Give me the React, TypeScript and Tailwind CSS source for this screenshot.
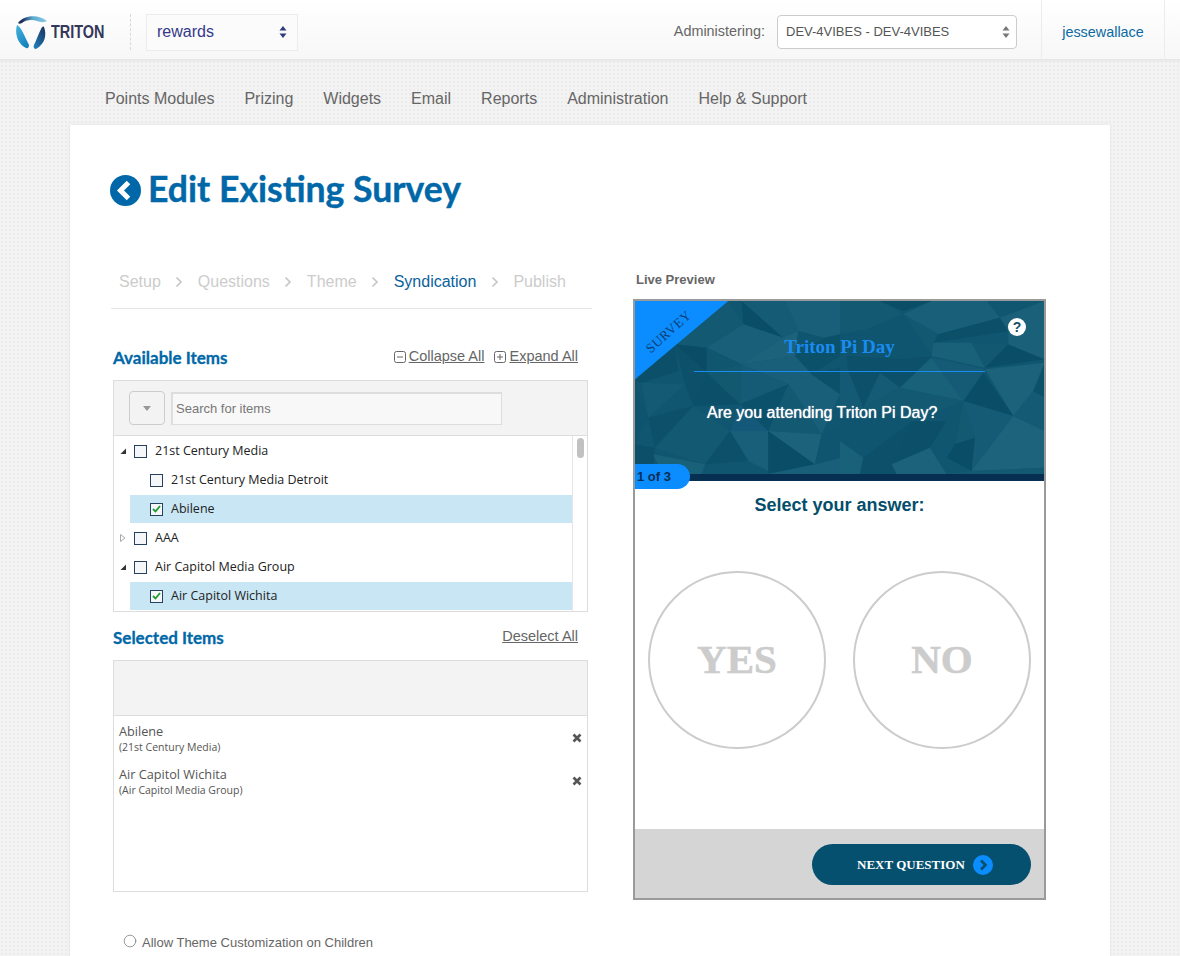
import React from 'react';
import { Circle } from 'lucide-react';

const navItems = ['Points Modules', 'Prizing', 'Widgets', 'Email', 'Reports', 'Administration', 'Help & Support'];

const steps = [
  { label: 'Setup', active: false },
  { label: 'Questions', active: false },
  { label: 'Theme', active: false },
  { label: 'Syndication', active: true },
  { label: 'Publish', active: false },
];

const treeRows = [
  { label: '21st Century Media', level: 0, toggle: 'open', checked: false },
  { label: '21st Century Media Detroit', level: 1, toggle: '', checked: false },
  { label: 'Abilene', level: 1, toggle: '', checked: true },
  { label: 'AAA', level: 0, toggle: 'closed', checked: false },
  { label: 'Air Capitol Media Group', level: 0, toggle: 'open', checked: false },
  { label: 'Air Capitol Wichita', level: 1, toggle: '', checked: true },
];

const selectedItems = [
  { name: 'Abilene', parent: '(21st Century Media)' },
  { name: 'Air Capitol Wichita', parent: '(Air Capitol Media Group)' },
];

// banner facets, in a 1227 x 519 box (3x the banner size)
const leftFacets: [string, string][] = [
  ['280,0 325,70 215,140 120,130', '#135972'],
  ['320,0 445,110 325,70', '#0a4d67'],
  ['320,0 450,0 490,90 445,110', '#165b75'],
  ['325,70 445,110 320,190 215,140', '#1a5f79'],
  ['215,140 120,130 215,215', '#0a4c65'],
  ['215,140 320,190 215,215', '#11566f'],
  ['320,190 445,110 490,90 480,165', '#1c627b'],
  ['490,90 570,110 480,165', '#0f5570'],
  ['450,0 615,0 615,100 570,110 490,90', '#1a5f79'],
  ['480,165 570,110 615,100 615,165 530,220', '#0c516a'],
  ['320,190 480,165 530,220 460,250', '#1a5f79'],
  ['0,240 120,130 130,210 20,245', '#0b4f69'],
  ['20,245 150,250 40,350', '#155a74'],
  ['120,130 215,215 175,315 150,250', '#0c506a'],
  ['215,215 315,310 175,315', '#0b4f69'],
  ['215,215 320,190 315,310', '#12586f'],
  ['320,190 460,250 315,310', '#165b75'],
  ['460,250 530,220 615,280 560,400', '#1a5f79'],
  ['530,220 615,200 615,280', '#0c516a'],
  ['315,310 460,250 400,390', '#0c516b'],
  ['460,250 560,400 400,390', '#135972'],
  ['40,350 175,315 60,440', '#0c506a'],
  ['175,315 285,390 210,490 60,440', '#135972'],
  ['0,240 40,350 0,430', '#0e546e'],
  ['0,430 60,440 55,490 0,519', '#0b4f68'],
  ['315,310 400,390 285,390', '#14597a'],
  ['285,390 400,390 400,510 340,480', '#1a5f79'],
  ['285,390 340,480 210,490', '#0c506a'],
  ['400,390 540,490 400,519', '#0a4d67'],
  ['400,390 560,400 540,490', '#1c627b'],
  ['55,460 210,490 200,519 80,519', '#196079'],
  ['540,490 615,470 615,519 400,519', '#1a5f79'],
  ['560,400 615,380 615,470 540,490', '#0f556f'],
];

const rightFacets: [string, string][] = [
  ['0,0 120,0 190,40 80,85 0,100', '#135972'],
  ['120,0 275,0 190,30', '#0a4d67'],
  ['190,40 275,0 440,0 480,50 295,100', '#1a5f79'],
  ['190,40 275,160 295,100', '#125870'],
  ['295,100 480,50 505,90 280,125', '#0b4f69'],
  ['280,125 395,125 435,200 275,165', '#196079'],
  ['505,130 615,175 435,200', '#0a4d67'],
  ['480,50 615,0 615,175 505,130 505,90', '#1a6079'],
  ['395,125 505,130 435,200', '#125870'],
  ['0,100 80,85 190,40 275,160 180,175 20,165', '#0f5570'],
  ['20,165 180,175 275,165 180,260 120,215 25,210', '#0c506a'],
  ['435,205 615,185 580,270 520,345', '#1c627b'],
  ['430,215 370,300 520,345', '#0a4d67'],
  ['180,260 275,170 370,300', '#196079'],
  ['275,170 435,205 370,300', '#165b75'],
  ['25,210 120,215 70,320', '#0c506a'],
  ['0,210 25,210 70,320 0,350', '#155a74'],
  ['120,215 180,260 70,320', '#165b75'],
  ['70,320 180,260 370,300 220,360', '#135972'],
  ['0,350 70,320 220,360 70,470 0,420', '#0f5570'],
  ['0,420 70,470 60,519 0,519', '#196079'],
  ['220,360 320,360 270,440 155,490', '#0b4f69'],
  ['70,470 220,360 155,490 170,519 60,519', '#0c506a'],
  ['320,360 370,300 345,430 270,440', '#11566f'],
  ['370,300 405,410 345,430', '#135972'],
  ['345,430 405,410 395,510 320,470', '#0a4d67'],
  ['370,300 520,345 395,510 405,410', '#165b75'],
  ['520,345 615,390 615,500 395,510', '#1d637c'],
  ['520,345 580,270 615,290 615,390', '#155a74'],
  ['580,270 615,185 615,290', '#0c516a'],
  ['155,490 270,440 320,519 170,519', '#1c627b'],
  ['270,440 320,470 395,510 320,519', '#11566f'],
  ['395,510 615,500 615,519 320,519', '#135972'],
];

const Logo = () => (
  <svg width="32" height="34" viewBox="0 0 32 34" className="shrink-0">
    <defs>
      <linearGradient id="logoTop" x1="0" y1="0" x2="1" y2="0">
        <stop offset="0.15" stopColor="#1c2f5c" />
        <stop offset="0.5" stopColor="#5aa9d0" />
        <stop offset="1" stopColor="#8ccbe6" />
      </linearGradient>
      <linearGradient id="logoLeft" x1="0" y1="0" x2="0.6" y2="1">
        <stop offset="0" stopColor="#45b4e0" />
        <stop offset="1" stopColor="#1583bd" />
      </linearGradient>
      <linearGradient id="logoRight" x1="1" y1="0" x2="0.2" y2="1">
        <stop offset="0" stopColor="#1c2f5c" />
        <stop offset="1" stopColor="#1f7db8" />
      </linearGradient>
    </defs>
    <path d="M3 8 C8 1 22 -2 32 6 C28 8 26 7 22 6 C17 4 10 5 7 8 C5 9 4 9 3 8Z" fill="url(#logoTop)" />
    <path d="M2 10 C6 12 9 20 14 30 C14 32 13 34 11 33 C4 30 -1 20 2 10Z" fill="url(#logoLeft)" />
    <path d="M29 12 C32 20 30 29 21 34 C19 34 18 32 19 30 C21 26 23 20 26 14 C27 12 28 11 29 12Z" fill="url(#logoRight)" />
  </svg>
);

const UpDown = ({ color }: { color: string }) => (
  <svg width="8" height="14" viewBox="0 0 8 14" className="shrink-0">
    <path d="M4 1 L7.5 5.5 H0.5Z M4 13 L7.5 8.5 H0.5Z" fill={color} />
  </svg>
);

const Chevron = () => (
  <svg width="8" height="12" viewBox="0 0 8 12" className="shrink-0">
    <path d="M1.5 1.5 L6 6 L1.5 10.5" fill="none" stroke="#c4c4c4" strokeWidth="1.6" />
  </svg>
);

const BoxIcon = ({ plus }: { plus?: boolean }) => (
  <svg width="12" height="12" viewBox="0 0 12 12" className="shrink-0">
    <rect x="0.5" y="0.5" width="11" height="11" rx="2" fill="none" stroke="#666" />
    <path d={plus ? 'M3 6H9M6 3V9' : 'M3 6H9'} stroke="#666" />
  </svg>
);

const TreeCheck = ({ checked }: { checked: boolean }) => (
  <span className="w-[13px] h-[13px] shrink-0 border border-[#24425f] bg-[#f4f6f7] flex items-center justify-center">
    {checked && (
      <svg width="9" height="8" viewBox="0 0 9 8">
        <path d="M1 4 L3.5 6.5 L8 1" fill="none" stroke="#1f9a2e" strokeWidth="1.8" />
      </svg>
    )}
  </span>
);

const Toggle = ({ kind }: { kind: string }) => (
  <span className="w-[8px] h-[8px] shrink-0">
    {kind === 'open' && (
      <svg width="8" height="8" viewBox="0 0 8 8">
        <path d="M7 1.5 V7 H1.5Z" fill="#333" />
      </svg>
    )}
    {kind === 'closed' && (
      <svg width="8" height="8" viewBox="0 0 8 8">
        <path d="M1.5 0.5 L6 4 L1.5 7.5Z" fill="#fff" stroke="#aaa" />
      </svg>
    )}
  </span>
);

export default function App() {
  return (
    <div className="h-screen overflow-hidden bg-[#f3f3f3] bg-[radial-gradient(#ebebeb_1px,transparent_1px)] bg-[length:4px_4px] font-['Liberation_Sans',sans-serif]">
      {/* Top bar */}
      <header className="h-[60px] pt-[5px] flex items-center bg-gradient-to-b from-white to-[#f7f7f7] border-b border-[#e6e6e6] shadow-[0_1px_2px_rgba(0,0,0,0.05)]">
        <div className="flex items-center ml-[15px] w-[115px] h-[34px]">
          <Logo />
          <span className="ml-[4px] inline-block scale-x-[0.76] origin-left font-bold text-[19px] text-[#34365a]">TRITON</span>
        </div>
        <div className="w-px h-[36px] border-l border-dashed border-[#d8d8d8]" />
        <div className="ml-[15px] w-[152px] h-[37px] border border-[#ececec] bg-[#fbfbfb] flex items-center justify-between pl-[10px] pr-[10px] text-[16px] text-[#34398a]">
          rewards
          <UpDown color="#2f3b7e" />
        </div>
        <span className="ml-auto text-[14.4px] text-[#666]">Administering:</span>
        <div className="ml-[12px] w-[240px] h-[34px] border border-[#ccc] rounded-[4px] bg-white flex items-center justify-between pl-[8px] pr-[6px] text-[13px] text-[#555]">
          DEV-4VIBES - DEV-4VIBES
          <UpDown color="#777" />
        </div>
        <div className="ml-[24px] mr-[15px] w-[124px] h-[60px] self-start -mt-[5px] pt-[5px] border-x border-[#ececec] flex items-center justify-center text-[14.4px] text-[#0a6aa1]">
          jessewallace
        </div>
      </header>

      {/* Main nav */}
      <nav className="h-[65px] pt-[12px] pl-[105px] flex items-center gap-[30px] text-[16px] text-[#666]">
        {navItems.map((item) => (
          <span key={item}>{item}</span>
        ))}
      </nav>

      {/* Card */}
      <main className="mx-[70px] h-[900px] bg-white pl-[40px] pt-[47px] shadow-[0_0_3px_rgba(0,0,0,0.08)]">
        <div className="flex items-center gap-[7px] h-[36px]">
          <svg width="31" height="31" viewBox="0 0 31 31" className="shrink-0">
            <circle cx="15.5" cy="15.5" r="15.5" fill="#0068a8" />
            <path d="M18.5 7.5 L10.5 15.5 L18.5 23.5" fill="none" stroke="#fff" strokeWidth="5" />
          </svg>
          <h1 className="font-['Lato',sans-serif] font-bold text-[35.6px] -mt-[2px] text-[#0068a8] leading-none [-webkit-text-stroke:0.4px_#0068a8]">Edit Existing Survey</h1>
        </div>

        <div className="flex mt-[53px]">
          {/* Left column */}
          <section className="w-[481px] shrink-0 ml-px">
            <div className="h-[48px] pl-[8px] flex items-center gap-[14.5px] border-b border-[#e5e5e5] text-[16px] text-[#ccc] pb-[6px]">
              {steps.map((step, i) => (
                <React.Fragment key={step.label}>
                  <span className={step.active ? 'text-[#0a629c]' : ''}>{step.label}</span>
                  {i < steps.length - 1 && <Chevron />}
                </React.Fragment>
              ))}
            </div>

            <div className="ml-[2px] w-[475px]">
              <div className="mt-[37px] h-[24px] flex items-center justify-between">
                <h2 className="font-['Lato',sans-serif] font-bold text-[17px] text-[#0068a8] [-webkit-text-stroke:0.3px_#0068a8]">Available Items</h2>
                <div className="flex items-center gap-[10px] pr-[10px] text-[14.5px] text-[#666]">
                  <span className="flex items-center -mt-[2px]"><BoxIcon /><span className="underline ml-[3px]">Collapse All</span></span>
                  <span className="flex items-center -mt-[2px]"><BoxIcon plus /><span className="underline ml-[3px]">Expand All</span></span>
                </div>
              </div>

              <div className="mt-[10px] h-[232px] border border-[#ddd] flex flex-col overflow-hidden">
                <div className="h-[55px] shrink-0 bg-[#f3f3f3] border-b border-[#ddd] flex items-center pl-[15px] gap-[6px]">
                  <div className="w-[36px] h-[34px] border border-[#ccc] rounded-[4px] flex items-center justify-center">
                    <svg width="10" height="5" viewBox="0 0 10 5"><path d="M1 0 H9 L5 5Z" fill="#999" /></svg>
                  </div>
                  <div className="w-[331px] h-[33px] border border-[#ddd] border-l-2 border-t-2 bg-[#f8f8f8] flex items-center pl-[3px] text-[13px] text-[#777]">
                    Search for items
                  </div>
                </div>
                <div className="flex-1 flex min-h-0">
                  <div className="flex-1 pl-[5px] pt-px font-['Open_Sans',sans-serif] text-[12.5px] text-[#222]">
                    {treeRows.map((row) => (
                      <div key={row.label} className={row.checked ? 'h-[28px] mb-px flex items-center bg-[#c9e6f5] ml-[11px]' : 'h-[28px] mb-px flex items-center'}>
                        {row.level === 0 ? (
                          <span className="flex items-center gap-[7px] mr-[8px]"><Toggle kind={row.toggle} /><TreeCheck checked={row.checked} /></span>
                        ) : (
                          <span className={row.checked ? 'ml-[20px] mr-[8px] flex' : 'ml-[31px] mr-[8px] flex'}><TreeCheck checked={row.checked} /></span>
                        )}
                        {row.label}
                      </div>
                    ))}
                  </div>
                  <div className="w-[15px] shrink-0 border-l border-[#e5e5e5] flex justify-center pt-[2px]">
                    <div className="w-[7px] h-[20px] rounded-full bg-[#c1c1c1]" />
                  </div>
                </div>
              </div>

              <div className="mt-[14px] h-[24px] flex items-center justify-between">
                <h2 className="font-['Lato',sans-serif] font-bold text-[17px] text-[#0068a8] [-webkit-text-stroke:0.3px_#0068a8]">Selected Items</h2>
                <span className="pr-[10px] -mt-[2px] text-[14.5px] text-[#666] underline">Deselect All</span>
              </div>

              <div className="mt-[10px] h-[232px] border border-[#ddd]">
                <div className="h-[55px] bg-[#f3f3f3] border-b border-[#ddd]" />
                <div className="px-[5px] font-['Open_Sans',sans-serif] text-[#555]">
                  {selectedItems.map((item) => (
                    <div key={item.name} className="h-[43px] flex items-center justify-between">
                      <div>
                        <div className="text-[12.7px] leading-[18px]">{item.name}</div>
                        <div className="text-[10.5px] leading-[14px]">{item.parent}</div>
                      </div>
                      <svg width="10" height="10" viewBox="0 0 10 10" className="shrink-0 mt-[1px]">
                        <path d="M1.5 1.5 L8.5 8.5 M8.5 1.5 L1.5 8.5" stroke="#555" strokeWidth="2.6" />
                      </svg>
                    </div>
                  ))}
                </div>
              </div>

              <label className="mt-[41px] ml-[10px] flex items-center gap-[5px] text-[13px] text-[#666]">
                <Circle size={14} strokeWidth={1} color="#555" className="-mt-[3px]" />
                Allow Theme Customization on Children
              </label>
            </div>
          </section>

          {/* Live preview */}
          <section className="ml-[41px] w-[413px] shrink-0">
            <div className="text-[13px] font-bold text-[#666] h-[16px] leading-[16px] pl-[3px] mt-[11px] mb-[11px]">Live Preview</div>
            <div className="h-[601px] border-2 border-[#9a9a9a] flex flex-col">
              <div className="relative h-[173px] shrink-0 bg-[#105670] overflow-hidden">
                <svg width="409" height="173" viewBox="0 0 1227 519" className="absolute inset-0">
                  {leftFacets.map(([points, fill]) => (
                    <polygon key={points} points={points} fill={fill} />
                  ))}
                  <g transform="translate(615 0)">
                    {rightFacets.map(([points, fill]) => (
                      <polygon key={points} points={points} fill={fill} />
                    ))}
                  </g>
                  <polygon points="0,0 280,0 0,235" fill="#0b8cff" />
                </svg>
                <span className="absolute left-[6px] top-[21px] -rotate-[42deg] font-['Liberation_Serif',serif] font-medium text-[13.5px] text-[#0a3f73] tracking-[0.5px]">SURVEY</span>
                <svg width="18" height="18" viewBox="0 0 18 18" className="absolute right-[18px] top-[17px]">
                  <circle cx="9" cy="9" r="9" fill="#fff" />
                  <text x="9" y="14" textAnchor="middle" fontSize="14" fontWeight="700" fontFamily="Liberation Sans" fill="#10506c">?</text>
                </svg>
                <div className="relative pt-[35px] text-center font-['Liberation_Serif',serif] font-bold text-[19px] leading-[22px] text-[#1a8cf0]">Triton Pi Day</div>
                <div className="relative mx-[59px] mt-[13px] h-px bg-[#1a8cf0]" />
                <div className="relative pl-[72px] mt-[31px] text-[16px] leading-[20px] text-white [text-shadow:0_0_1px_#fff]">Are you attending Triton Pi Day?</div>
              </div>
              <div className="relative h-[7px] shrink-0 bg-[#062f52]">
                <span className="absolute left-0 -top-[10px] w-[55px] h-[25px] bg-[#0b8cff] rounded-r-[14px] text-[13px] font-bold text-[#0a2f52] flex items-center pl-[2px]">1 of 3</span>
              </div>
              <div className="flex-1 bg-white">
                <div className="pt-[13px] text-center text-[18px] leading-[22px] font-bold text-[#044e6c]">Select your answer:</div>
                <div className="mt-[55px] pl-[13px] flex gap-[27px] font-['Liberation_Serif',serif] font-bold text-[41px] text-[#ccc] [-webkit-text-stroke:0.5px_#ccc]">
                  <div className="w-[178px] h-[178px] rounded-full border-2 border-[#ccc] flex items-center justify-center">YES</div>
                  <div className="w-[178px] h-[178px] rounded-full border-2 border-[#ccc] flex items-center justify-center">NO</div>
                </div>
              </div>
              <div className="h-[69px] shrink-0 bg-[#d5d5d5] flex items-start justify-end pt-[15px] pr-[13px]">
                <div className="w-[219px] h-[41px] rounded-full bg-[#04506e] flex items-center pl-[45px] gap-[8px] font-['Liberation_Serif',serif] font-bold text-[13px] text-white">
                  NEXT QUESTION
                  <svg width="20" height="20" viewBox="0 0 20 20" className="shrink-0">
                    <circle cx="10" cy="10" r="10" fill="#0b8cff" />
                    <path d="M8 5.5 L12.5 10 L8 14.5" fill="none" stroke="#04506e" strokeWidth="2.6" />
                  </svg>
                </div>
              </div>
            </div>
          </section>
        </div>
      </main>
    </div>
  );
}
